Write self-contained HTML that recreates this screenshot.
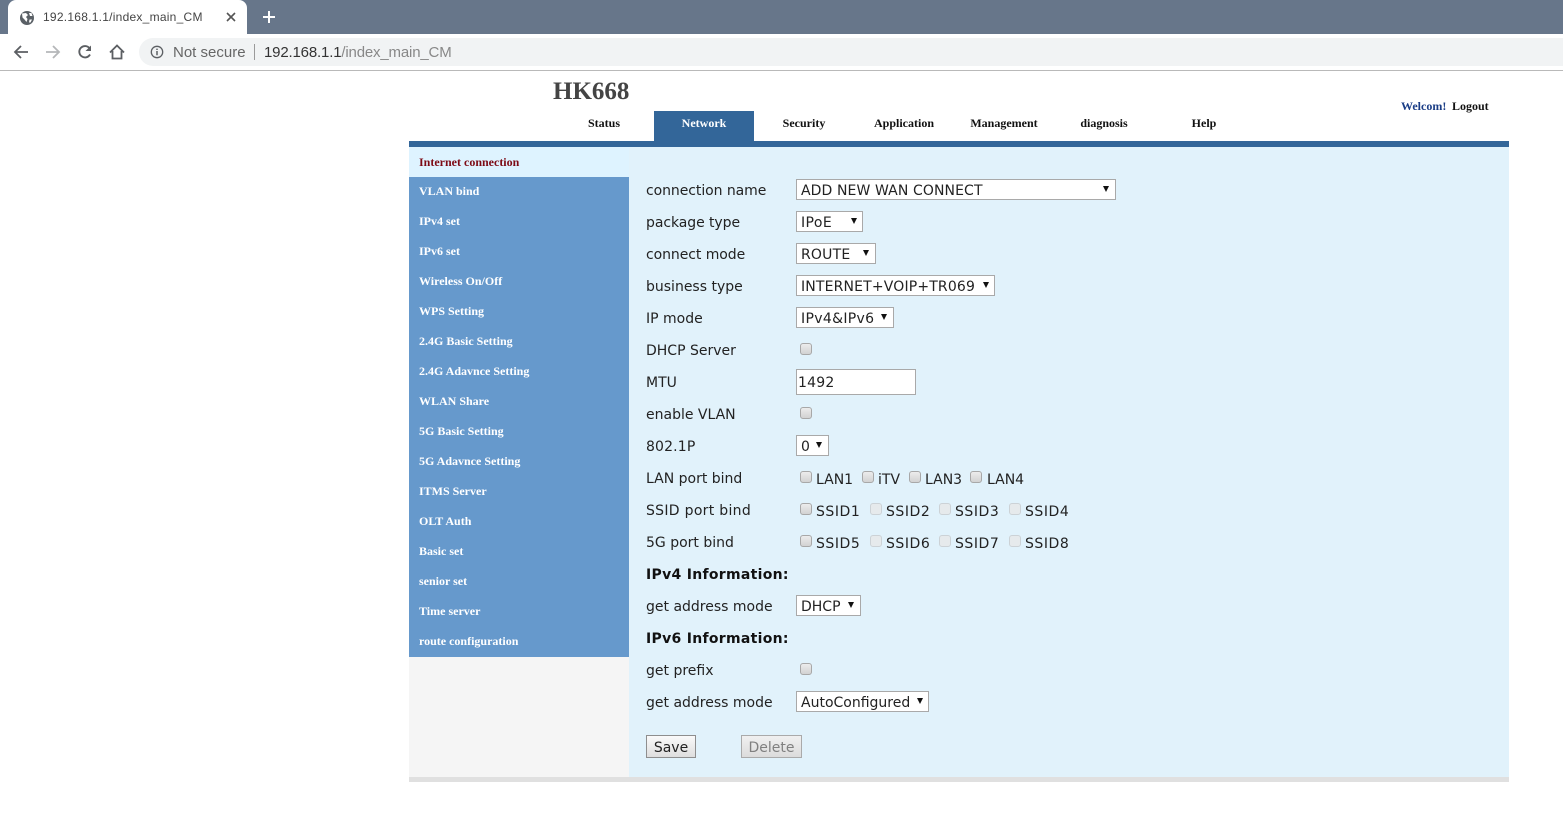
<!DOCTYPE html>
<html><head><meta charset="utf-8"><title>192.168.1.1/index_main_CM</title>
<style>
html,body{margin:0;padding:0;background:#fff;width:1563px;height:840px;overflow:hidden}
div,span,svg{position:absolute;white-space:nowrap;box-sizing:border-box}
.ch{font-family:"Liberation Sans",sans-serif}
.s{font-family:"Liberation Serif",serif;font-weight:bold;font-size:12px;line-height:14px}
.nav{top:116px;width:100px;text-align:center;color:#111}
.side{left:409px;width:220px;height:30px;background:#6699cc;color:#fff;padding:7px 0 0 10px;border-top:0}
.l{left:646px;margin-top:1px;font-family:"DejaVu Sans",sans-serif;font-size:14px;line-height:18px;color:#222}
.sel{left:796px;height:21px;background:#fff;border:1px solid #a9a9a9;font-family:"DejaVu Sans",sans-serif;font-size:14px;line-height:23px;color:#222;padding-left:4px}
.sel i{position:absolute;top:6px;width:0;height:0;border-left:3px solid transparent;border-right:3px solid transparent;border-top:6px solid #111}
.c{width:12px;height:12px;background:linear-gradient(#ececec,#d2d2d2);border:1px solid #a8a8a8;border-radius:3px}
.d{background:#e6eaec;border-color:#ccd2d6}
.w{letter-spacing:.55px}
</style></head><body>

<div style="left:0;top:0;width:1563px;height:34px;background:#67768a"></div>
<div style="left:8px;top:0;width:239px;height:34px;background:#fff;border-radius:8px 8px 0 0"></div>
<svg style="left:19px;top:10px" width="16" height="16" viewBox="0 0 16 16"><circle cx="8" cy="8" r="7" fill="#5a6066"/><path d="M3 3.5 7 3l2 2-2 2 1.500 2-1 3-2-2.500-2-2zM10 3h2.500l1 3H11zM10.500 9.500 13 9.500l-1.500 3H10z" fill="#fff"/></svg>
<div class="ch" style="left:43px;top:9px;font-size:12px;letter-spacing:.25px;line-height:16px;color:#444">192.168.1.1/index_main_CM</div>
<svg style="left:226px;top:12px" width="10" height="10" viewBox="0 0 10 10"><path d="M1 1 9 9M9 1 1 9" stroke="#555" stroke-width="1.600"/></svg>
<svg style="left:262px;top:10px" width="14" height="14" viewBox="0 0 14 14"><path d="M7 1v12M1 7h12" stroke="#fff" stroke-width="2"/></svg>

<div style="left:0;top:34px;width:1563px;height:36px;background:#fff"></div>
<div style="left:0;top:70px;width:1563px;height:1px;background:#b9b9b9"></div>
<svg style="left:13px;top:44px" width="16" height="16" viewBox="0 0 16 16"><path d="M15 8H2M8 2 2 8l6 6" fill="none" stroke="#5c5f63" stroke-width="1.800"/></svg>
<svg style="left:45px;top:44px" width="16" height="16" viewBox="0 0 16 16"><path d="M1 8h13M8 2l6 6-6 6" fill="none" stroke="#b5b7b9" stroke-width="1.800"/></svg>
<svg style="left:77px;top:44px" width="16" height="16" viewBox="0 0 16 16"><path d="M13 10.500A5.700 5.700 0 1 1 12.500 4.200" fill="none" stroke="#5c5f63" stroke-width="1.900"/><path d="M14 1.500V7H8.500z" fill="#5c5f63"/></svg>
<svg style="left:109px;top:44px" width="16" height="16" viewBox="0 0 16 16"><path d="M1 8.500 8 1.500l7 7M3.500 7v7.500h9V7" fill="none" stroke="#5c5f63" stroke-width="1.800"/></svg>
<div style="left:139px;top:38px;width:1424px;height:28px;background:#f1f3f4;border-radius:14px 0 0 14px"></div>
<svg style="left:150px;top:45px" width="14" height="14" viewBox="0 0 14 14"><circle cx="7" cy="7" r="5.700" fill="none" stroke="#5c5f63" stroke-width="1.300"/><path d="M7 6v4.200M7 3.600v1.400" stroke="#5c5f63" stroke-width="1.500"/></svg>
<div class="ch" style="left:173px;top:44px;font-size:15px;line-height:18px;color:#666">Not secure</div>
<div style="left:254px;top:44px;width:1px;height:16px;background:#9a9a9a"></div>
<div class="ch" style="left:264px;top:44px;font-size:15px;letter-spacing:-.17px;line-height:18px;color:#888"><span style="position:static;color:#333">192.168.1.1</span>/index_main_CM</div>

<div style="left:553px;top:77px;font-family:'Liberation Serif',serif;font-weight:bold;font-size:25px;line-height:30px;color:#444">HK668</div>

<div style="left:654px;top:111px;width:100px;height:31px;background:#336699"></div>
<div class="s nav" style="left:554px">Status</div>
<div class="s nav" style="left:654px;color:#fff">Network</div>
<div class="s nav" style="left:754px">Security</div>
<div class="s nav" style="left:854px">Application</div>
<div class="s nav" style="left:954px">Management</div>
<div class="s nav" style="left:1054px">diagnosis</div>
<div class="s nav" style="left:1154px">Help</div>
<div class="s" style="left:1401px;top:99px;color:#1a3d86">Welcom!</div>
<div class="s" style="left:1452px;top:99px;color:#111">Logout</div>

<div style="left:409px;top:141px;width:1100px;height:6px;background:#336699"></div>
<div style="left:409px;top:147px;width:1100px;height:630px;background:#e1f2fb"></div>
<div style="left:409px;top:147px;width:220px;height:30px;background:#def3ff"></div>
<div style="left:409px;top:657px;width:220px;height:120px;background:#f5f5f5"></div>
<div style="left:409px;top:777px;width:1100px;height:5px;background:#e0e0e0"></div>

<div class="s" style="left:419px;top:155px;color:#7d0a14">Internet connection</div>
<div class="s side" style="top:177px">VLAN bind</div>
<div class="s side" style="top:207px">IPv4 set</div>
<div class="s side" style="top:237px">IPv6 set</div>
<div class="s side" style="top:267px">Wireless On/Off</div>
<div class="s side" style="top:297px">WPS Setting</div>
<div class="s side" style="top:327px">2.4G Basic Setting</div>
<div class="s side" style="top:357px">2.4G Adavnce Setting</div>
<div class="s side" style="top:387px">WLAN Share</div>
<div class="s side" style="top:417px">5G Basic Setting</div>
<div class="s side" style="top:447px">5G Adavnce Setting</div>
<div class="s side" style="top:477px">ITMS Server</div>
<div class="s side" style="top:507px">OLT Auth</div>
<div class="s side" style="top:537px">Basic set</div>
<div class="s side" style="top:567px">senior set</div>
<div class="s side" style="top:597px">Time server</div>
<div class="s side" style="top:627px">route configuration</div>

<div class="l" style="top:181px;letter-spacing:-.07px">connection name</div>
<div class="sel" style="top:179px;width:320px;letter-spacing:.1px">ADD NEW WAN CONNECT<i style="left:306px"></i></div>
<div class="l" style="top:213px;letter-spacing:-.07px">package type</div>
<div class="sel" style="top:211px;width:67px;letter-spacing:.4px">IPoE<i style="left:54px"></i></div>
<div class="l" style="top:245px;letter-spacing:-.07px">connect mode</div>
<div class="sel" style="top:243px;width:80px;letter-spacing:.2px">ROUTE<i style="left:66px"></i></div>
<div class="l" style="top:277px">business type</div>
<div class="sel" style="top:275px;width:199px;letter-spacing:.16px">INTERNET+VOIP+TR069<i style="left:186px"></i></div>
<div class="l" style="top:309px">IP mode</div>
<div class="sel" style="top:307px;width:98px;letter-spacing:.33px">IPv4&amp;IPv6<i style="left:84px"></i></div>
<div class="l" style="top:341px">DHCP Server</div>
<div class="c" style="left:800px;top:343px"></div>
<div class="l" style="top:373px">MTU</div>
<div class="sel" style="top:369px;width:120px;height:26px;line-height:26px;padding-left:1px;letter-spacing:.2px">1492</div>
<div class="l" style="top:405px">enable VLAN</div>
<div class="c" style="left:800px;top:407px"></div>
<div class="l" style="top:437px;letter-spacing:.15px">802.1P</div>
<div class="sel" style="top:435px;width:33px">0<i style="left:19px"></i></div>

<div class="l" style="top:469px">LAN port bind</div>
<div class="c" style="left:800px;top:471px"></div><div class="l" style="left:816px;top:470px">LAN1</div>
<div class="c" style="left:862px;top:471px"></div><div class="l" style="left:878px;top:470px">iTV</div>
<div class="c" style="left:909px;top:471px"></div><div class="l" style="left:925px;top:470px">LAN3</div>
<div class="c" style="left:970px;top:471px"></div><div class="l" style="left:987px;top:470px">LAN4</div>

<div class="l" style="top:501px;letter-spacing:.3px">SSID port bind</div>
<div class="c" style="left:800px;top:503px"></div><div class="l w" style="left:816px;top:502px">SSID1</div>
<div class="c d" style="left:870px;top:503px"></div><div class="l w" style="left:886px;top:502px">SSID2</div>
<div class="c d" style="left:939px;top:503px"></div><div class="l w" style="left:955px;top:502px">SSID3</div>
<div class="c d" style="left:1009px;top:503px"></div><div class="l w" style="left:1025px;top:502px">SSID4</div>

<div class="l" style="top:533px">5G port bind</div>
<div class="c" style="left:800px;top:535px"></div><div class="l w" style="left:816px;top:534px">SSID5</div>
<div class="c d" style="left:870px;top:535px"></div><div class="l w" style="left:886px;top:534px">SSID6</div>
<div class="c d" style="left:939px;top:535px"></div><div class="l w" style="left:955px;top:534px">SSID7</div>
<div class="c d" style="left:1009px;top:535px"></div><div class="l w" style="left:1025px;top:534px">SSID8</div>

<div class="l" style="top:565px;font-weight:bold;color:#111;letter-spacing:.3px">IPv4 Information:</div>
<div class="l" style="top:597px">get address mode</div>
<div class="sel" style="top:595px;width:65px">DHCP<i style="left:51px"></i></div>
<div class="l" style="top:629px;font-weight:bold;color:#111;letter-spacing:.3px">IPv6 Information:</div>
<div class="l" style="top:661px">get prefix</div>
<div class="c" style="left:800px;top:663px"></div>
<div class="l" style="top:693px">get address mode</div>
<div class="sel" style="top:691px;width:133px">AutoConfigured<i style="left:120px"></i></div>

<div class="l" style="left:646px;top:735px;margin-top:0;width:50px;height:23px;background:linear-gradient(#fafafa,#dedede);border:1px solid #8e8e8e;text-align:center;line-height:24px">Save</div>
<div class="l" style="left:741px;top:735px;margin-top:0;width:61px;height:23px;background:linear-gradient(#f0f0f0,#dcdcdc);border:1px solid #aaa;text-align:center;line-height:24px;color:#808080">Delete</div>

</body></html>
